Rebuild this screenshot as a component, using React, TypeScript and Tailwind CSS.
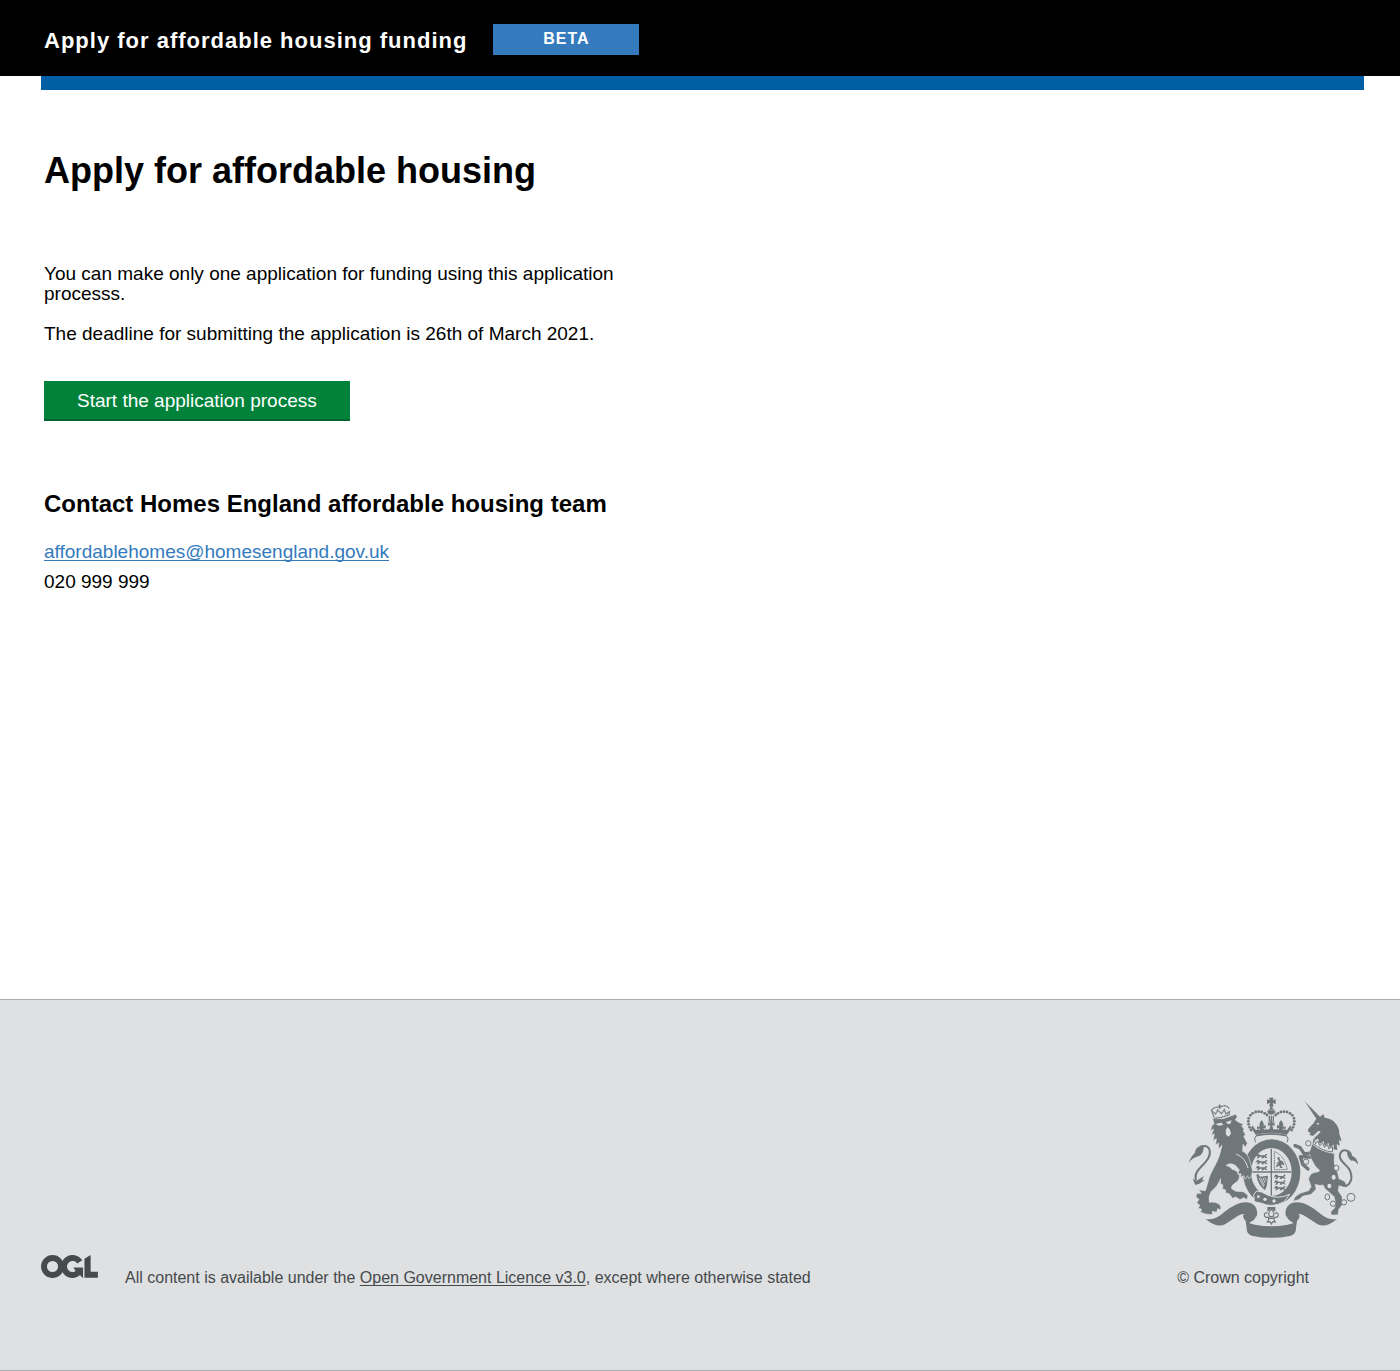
import React from "react";

function OglLogo() {
  return (
    <svg viewBox="0 0 484 196" className="w-[57px] shrink-0" role="img" aria-label="Open Government Licence">
      <g fill="none" stroke="#454a4c" strokeWidth="50.5">
        <circle cx="97.8" cy="97.8" r="72.5" />
        <path d="M329 59 A72.5 72.5 0 1 0 316 152" />
      </g>
      <path fill="#454a4c" d="M275 106h82v88h-5l-20-22-38-37z M369 32L421.500 0V143H483V194H369z" />
    </svg>
  );
}

const leftQuarterLions = [228, 246, 264];
const rightQuarterLions = [290, 307, 324];

const crownPearls: [number, number][] = [
  [303, 151], [299, 143], [296, 134], [295, 125], [296, 116], [301, 107], [308, 101], [317, 97], [326, 96], [335, 97], [344, 101], [351, 106],
];

function Passant({ x, y }: { x: number; y: number }) {
  return (
    <path
      transform={`translate(${x} ${y})`}
      d="M0 0l4-6 5 2 3 3h14l5-5 3 3-5 5 6 5h-7l-3-3-3 4h-6l2-5h-6l-4 5h-6l4-5-3-2-5 3z"
    />
  );
}

function CrownAndShield() {
  return (
    <g transform="translate(-108 -45)">
      {crownPearls.map(([x, y]) => (
        <React.Fragment key={`${x}-${y}`}>
          <circle cx={x} cy={y} r="4.300" />
          <circle cx={728 - x} cy={y} r="4.300" />
        </React.Fragment>
      ))}
      <path d="M357 54h14l-3 8 9-3v14l-9-3 3 10h-14l3-10-9 3v-14l9 3z" />
      <path d="M360 80h8v8h-8z M352 94h24v4q-3 7-12 7t-12-7z M355 89h18v4h-18z" />
      <path d="M356 108h4v18h-4z M362 108h4v18h-4z M368 108h4v18h-4z" />
      <path d="M364 142l-4-5-7 2 2-5-2-6 8 2-2-6h10l-2 6 8-2-2 6 2 5-7-2z M360 140h8l2 12h-12z" />
      <path d="M335 121q9 10 5 17l7-2v11l-7-3 3 9-15 2 2-9-8 5-1-11 8 2q-3-10 6-21z M393 121q-9 10-5 17l-7-2v11l7-3-3 9 15 2-2-9 8 5 1-11-8 2q3-10-6-21z" />
      <path d="M307 137l10 14q47-5 94 0l10-14 3 8-13 20q-47-11-94 0l-13-20z" />
      <path d="M318 168q46-11 92 0" fill="none" stroke="#6f777b" strokeWidth="5" />
      <path d="M318 169q-8 8-1 19M410 169q8 8 1 19" fill="none" stroke="#6f777b" strokeWidth="3" />

      <ellipse cx="365" cy="278" rx="86" ry="99" />
      <ellipse cx="364" cy="277" rx="61" ry="72" fill="#dee0e2" />
      <path d="M362 207h4v141h-4z M304 275h120v4h-120z" />
      {leftQuarterLions.map((y) => <Passant key={y} x={318} y={y} />)}
      {rightQuarterLions.map((y) => <Passant key={y} x={373} y={y} />)}
      <path d="M319 285l6-2 4 8 25-3-2 18q0 14-7 26-22-16-26-47z" />
      <path d="M327 295l14 27M332 295l11 22M338 294l8 16M344 293l5 10" stroke="#dee0e2" strokeWidth="2.500" />
      <path d="M373 216q30 10 39 54h-39z" fill="none" stroke="#6f777b" strokeWidth="3" strokeDasharray="5 2" />
      <path d="M381 235l7-4 2 10 8 4 6 10-4 2-5-5-1 8 5 5h-8l-4-8-5 5-5-2 8-9-7 1 9-7z" />
      <path d="M311 345l9-11 15 3 18 9q30 14 66-2l-16 22q-38 20-68 5l-22-5z" stroke="#dee0e2" strokeWidth="3" />
      <circle cx="325" cy="351" r="4" fill="#dee0e2" />
      <circle cx="345" cy="359" r="5" fill="#dee0e2" />
      <circle cx="372" cy="364" r="5" fill="#dee0e2" />
      <path d="M352 382h24v14l-12-8-12 8z" />
      <path
        fill="none"
        stroke="#6f777b"
        strokeWidth="3.500"
        d="M364 389q-14 14-3 22h6q11-8-3-22z M358 412q-14 4-15-6 1-9 10-5 M370 412q14 4 15-6-1-9-10-5 M354 416h20 M357 418l-5 9 8-1 4 7 4-7 8 1-5-9"
      />
    </g>
  );
}

function Ribbon() {
  return (
    <g transform="translate(-108 -45)">
      <path d="M167 418q24 4 45-12c25-19 47-38 78-38 24 1 34 21 31 38q-3 13-20 22-13 8-12-2-16-16-6-23-10-2-29 12l-29 19q-25 12-58-16z" />
      <path d="M561 418q-24 4-45-12c-25-19-47-38-78-38-24 1-34 21-31 38q3 13 20 22 13 8 12-2 16-16 6-23 10-2 29 12l29 19q25 12 58-16z" />
      <path d="M284 412q0 18 31 23 49 10 98 0 31-5 31-23-4 12-6 34 0 18-15 22-59 13-118 0-15-4-15-22-2-22-6-34z" />
      <path d="M301 430q16-8 18-20M427 430q-16-8-18-20" fill="none" stroke="#dee0e2" strokeWidth="2" />
    </g>
  );
}

function Lion() {
  return (
    <g>
      <path d="M8 204q8-20 18-28 3-22 22-22 7-1 5 6-2 20-14 24-18 4-31 20z" />
      <path d="M42 156c32-10 38 20 18 44-16 20-38 34-30 56" fill="none" stroke="#6f777b" strokeWidth="6" />
      <path d="M20 252l12 6 22-14-6 13 9-1-17 11-12 4z" />
      <path
        stroke="#dee0e2"
        strokeWidth="2"
        d="M80 72L112 72 148 59 154 65 148 76 160 84 172 88 167 94 175 104 171 107 179 121 173 124 184 146 178 158 171 149 170 170C184 176 190 190 194 208L200 228 196 246 188 252 185 243 177 254 174 243 164 248 165 237 154 238 160 226 150 214Q136 202 120 212Q134 216 138 224 156 228 160 242 162 258 146 266 134 274 137 282L150 290 172 291 186 302 183 315 173 309 162 315 149 307 140 311 129 297 118 294 119 286 109 282 111 272 103 265 104 252Q96 274 76 290 66 306 70 323 92 319 104 334L105 346 95 342 92 353 79 350 80 360 58 358 43 352 47 344 37 341 41 331 32 325 39 314 30 308 32 296 46 296 38 285 58 288 66 262C72 232 90 214 101 180L108 152 97 163 98 145 89 151 91 132 81 138 85 118 76 122 83 103 74 109 77 94 84 88z"
      />
      <path d="M88 88l17-4 8 6-14 3zM120 82l17-5-4 10-8 1zM125 97l7 8 3 12-7 9-8-6-1-14z" fill="#dee0e2" />
      <path d="M150 178c20 9 28 18 36 42" fill="none" stroke="#dee0e2" strokeWidth="3" />
      <path d="M84 71q24-2 46-11M84 68l-6-18 11 8 6-12 11 11 9-12 5 13 10-7-1 11M77 46q10-12 25-7 14-13 28 3" fill="none" stroke="#6f777b" strokeWidth="4" strokeDasharray="4 1" />
      <path d="M101 29v13M96 34h10" stroke="#6f777b" strokeWidth="3" />
    </g>
  );
}

function Unicorn() {
  return (
    <g>
      <path d="M356 20L403 67 393 75z" />
      <path d="M366 104Q376 92 384 84 388 72 398 70L412 58 416 69Q440 72 448 86 460 98 460 118L467 140 459 136 461 154 452 148 454 166 440 164 416 154 396 144 384 130Q400 118 404 110 394 106 389 117L380 124 370 120 374 114 367 112z" />
      <path d="M391 85l10 1-6 5z" fill="#dee0e2" />
      <path d="M381 133l4 14 9-9 5 17 11-9 4 16 11-10 3 14 11-8-1 14" fill="none" stroke="#dee0e2" strokeWidth="8" />
      <path d="M384 133l5 14 7-8 5 14 9-8 5 13 10-8 3 12 12-6-1 16q-32-3-58-26z" fill="none" stroke="#6f777b" strokeWidth="3" />
      <g fill="none" strokeLinejoin="round" strokeLinecap="round">
        <path d="M382 174L355 178 342 159 327 153 M384 188L343 186 350 209 366 223" stroke="#dee0e2" strokeWidth="15" />
        <path d="M382 174L355 178 342 159 327 153 M384 188L343 186 350 209 366 223" stroke="#6f777b" strokeWidth="10" />
      </g>
      <path
        stroke="#dee0e2"
        strokeWidth="1"
        d="M379 148Q404 172 445 177L444 195Q443 212 454 232L461 262 456 288 468 306 469 330 458 344 456 360 436 361 435 351 446 340 449 326 445 306 428 291Q415 282 411 270 402 274 387 268L390 284 375 299 350 304 340 314 322 319 328 306 344 296 368 288 376 276 368 254Q372 232 394 233L402 228 388 214 378 196 370 174z"
      />
      <path d="M456 264c30 28 48-8 36-36-8-18-36-30-30-48 5-20 31-14 30 0" fill="none" stroke="#6f777b" strokeWidth="6" />
      <path d="M480 166q19 4 18 17 18 8 18 27-10-14-20-12-12-7-13-26z M460 253l16 8 8 18-14-9-10 3-6-12z" />
      <g fill="#dee0e2" stroke="#6f777b" strokeWidth="3">
        <circle cx="367" cy="146" r="8" />
        <circle cx="360" cy="201" r="8" />
        <circle cx="451" cy="220" r="8" />
        <ellipse cx="443" cy="248" rx="6" ry="8" stroke="none" />
        <ellipse cx="430" cy="274" rx="6" ry="7" stroke="none" />
        <ellipse cx="424" cy="307" rx="7" ry="9" />
        <circle cx="441" cy="327" r="8" />
        <circle cx="474" cy="323" r="8" />
        <circle cx="495" cy="308" r="12" />
      </g>
    </g>
  );
}

function RoyalArms() {
  return (
    <svg viewBox="6 7 513 424" className="w-[171px]" role="img" aria-label="Royal coat of arms">
      <g fill="#6f777b">
        <CrownAndShield />
        <Ribbon />
        <Lion />
        <Unicorn />
      </g>
    </svg>
  );
}

export default function App() {
  return (
    <div className="bg-white font-['Liberation_Sans',Arial,sans-serif] text-black">
      <header>
        <div className="flex h-19 items-start gap-[26px] bg-black pl-11 text-white">
          <p className="mt-7 text-[22px] leading-[26px] font-bold tracking-[1px]">Apply for affordable housing funding</p>
          <strong className="mt-6 w-[146px] bg-[#347abd] pb-0.5 text-center text-base leading-[29px] tracking-[1px]">BETA</strong>
        </div>
        <div className="mr-9 ml-[41px] h-3.5 bg-[#005ea5]" />
      </header>

      <main className="min-h-[909px] px-11 pt-[61px]">
        <h1 className="text-4xl leading-10 font-bold">Apply for affordable housing</h1>
        <div className="mt-[73px] max-w-[600px] space-y-5 text-[19px] leading-5">
          <p>You can make only one application for funding using this application processs.</p>
          <p>The deadline for submitting the application is 26th of March 2021.</p>
        </div>
        <button type="button" className="mt-[37px] h-10 border-b-2 border-[#00662f] bg-[#00823b] px-[33px] pt-0.5 text-[19px] leading-5 text-white">
          Start the application process
        </button>
        <section className="mt-[68px]">
          <h2 className="text-2xl leading-[30px] font-bold">Contact Homes England affordable housing team</h2>
          <address className="mt-[18px] text-[19px] leading-[30px] not-italic">
            <a href="mailto:affordablehomes@homesengland.gov.uk" className="text-[#347abd] underline underline-offset-2 [text-decoration-skip-ink:none]">
              affordablehomes@homesengland.gov.uk
            </a>
            <p>020 999 999</p>
          </address>
        </section>
      </main>

      <footer className="flex items-end justify-between border-y border-[#a9acae] bg-[#dee0e2] pt-[97px] pr-[41px] pb-20 pl-[41px] text-base leading-6 text-[#454a4c]">
        <div className="flex items-end gap-[27px]">
          <div className="pb-3"><OglLogo /></div>
          <p>
            All content is available under the{" "}
            <a href="#licence" className="underline underline-offset-2 [text-decoration-skip-ink:none]">Open Government Licence v3.0</a>, except where otherwise stated
          </p>
        </div>
        <div className="flex flex-col gap-7">
          <div className="self-end"><RoyalArms /></div>
          <p className="pr-[50px]">© Crown copyright</p>
        </div>
      </footer>
    </div>
  );
}
